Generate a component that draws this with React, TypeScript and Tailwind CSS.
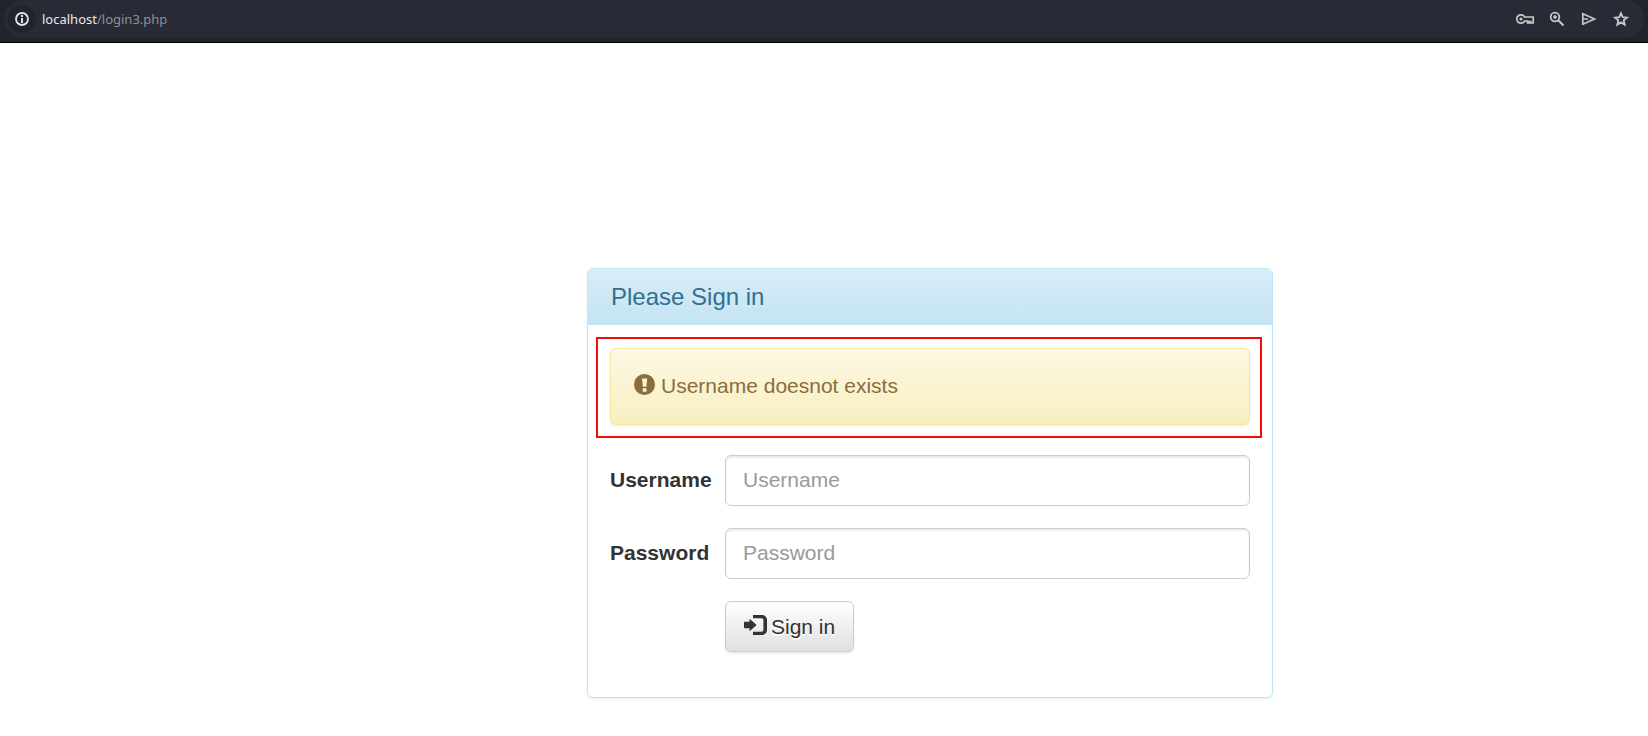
import React, { useState } from 'react';

const inputClass =
    'h-[51px] w-full rounded-[6px] border border-[#cccccc] bg-white px-[17px] pb-[2px] text-[21px] leading-[30px] text-[#555555] placeholder:text-[#999999] placeholder:opacity-100 shadow-[inset_0_2px_2px_rgba(0,0,0,0.075)] outline-none focus:border-[#66afe9]';

const labelClass = 'pb-[2px] text-[21px] leading-[30px] font-bold text-[#333333]';

const AddressBar = () => {
    return (
        <header className="bg-[#22242d] border-b border-black px-1 pb-1">
            <div className="flex h-[38px] items-center rounded-full bg-[#282a35] pl-1 pr-[13px]">
                <button type="button" aria-label="Site information" className="flex size-7 items-center justify-center rounded-full bg-[#22242d] text-[#e3e3e3]">
                    <svg viewBox="0 0 16 16" className="size-4" fill="currentColor">
                        <path d="M7 4h2v2H7zM7 7h2v5H7z" />
                        <circle cx="8" cy="8" r="6" fill="none" stroke="currentColor" strokeWidth="1.8" />
                    </svg>
                </button>
                <p className="ml-[6px] flex-1 font-['Noto_Sans',sans-serif] text-[13px] leading-5 text-[#8f9197]">
                    <span className="text-[#e8e8ea]">localhost</span>/login3.php
                </p>
                <nav className="flex items-center gap-3 text-[#c7c7c7]">
                    <button type="button" aria-label="Passwords">
                        <svg viewBox="0 0 20 20" className="size-5" fill="none" stroke="currentColor" strokeWidth="1.7">
                            <path d="M9.600 8a4.200 4.200 0 1 0 0 4h2.900v2h1.700v-1.500h1.500V14h2.500V8z" />
                            <circle cx="6" cy="10" r="1.6" fill="currentColor" stroke="none" />
                        </svg>
                    </button>
                    <button type="button" aria-label="Zoom">
                        <svg viewBox="0 0 20 20" className="size-5" fill="none" stroke="currentColor" strokeWidth="1.8">
                            <circle cx="8" cy="8" r="4.3" />
                            <path d="M11.2 11.2l5.300 5.300" strokeWidth="2" />
                            <path d="M8 6v4M6 8h4" strokeWidth="1.6" />
                        </svg>
                    </button>
                    <button type="button" aria-label="Share">
                        <svg viewBox="0 0 20 20" className="size-5" fill="none" stroke="currentColor" strokeWidth="1.7">
                            <path d="M3.800 4.800v10.400L15.500 10zM4 10h5" />
                        </svg>
                    </button>
                    <button type="button" aria-label="Bookmark">
                        <svg viewBox="0 0 20 20" className="size-5" fill="none" stroke="currentColor" strokeWidth="1.8">
                            <path d="M10 4.200l1.700 4 4.300.4-3.300 2.800 1 4.300-3.700-2.300-3.700 2.300 1-4.300L4 8.600l4.300-.4z" />
                        </svg>
                    </button>
                </nav>
            </div>
        </header>
    );
};

const App = () => {
    const [username, setUsername] = useState('');
    const [password, setPassword] = useState('');

    return (
        <div className="min-h-screen bg-white font-['Liberation_Sans',Arial,sans-serif]">
            <AddressBar />

            <main className="grid grid-cols-[587fr_686fr_375fr] pt-[225px] pb-9">
                <section className="col-start-2 rounded-[6px] border border-[#bce8f1] bg-white shadow-[0_2px_3px_rgba(0,0,0,0.05)]">
                    <div className="rounded-t-[5px] bg-linear-to-b from-[#d9edf7] to-[#c4e3f3] px-[23px] py-[14px]">
                        <h1 className="text-[24px] leading-7 text-[#31708f]">Please Sign in</h1>
                    </div>

                    <div className="mt-3 mr-[10px] ml-2 border-2 border-[#f70a03] pt-[9px] pr-[10px] pb-[11px] pl-3">
                        <div role="alert" className="flex items-center gap-[6px] rounded-[6px] border border-[#f5e79e] bg-linear-to-b from-[#fcf8e3] to-[#f8efc0] px-[23px] pt-[22px] pb-[23px] text-[21px] leading-[30px] text-[#8a6d3b] shadow-[inset_0_2px_0_rgba(255,255,255,0.25),0_2px_3px_rgba(0,0,0,0.05)]">
                            <svg viewBox="0 0 21 21" className="mb-1 size-[21px]">
                                <circle cx="10.5" cy="10.5" r="10.5" fill="currentColor" />
                                <path d="M8 4.600h5.200l-.8 8.200H8.900zM8.700 14.200h3.800v3.600H8.700z" fill="#faf3d2" />
                            </svg>
                            <span className="[text-shadow:0_1px_0_rgba(255,255,255,0.2)]">Username doesnot exists</span>
                        </div>
                    </div>

                    <form className="grid grid-cols-[115px_1fr] items-center gap-y-[22px] px-[22px] pt-[17px] pb-[45px]" onSubmit={(e) => e.preventDefault()}>
                        <label htmlFor="username" className={labelClass}>Username</label>
                        <input id="username" type="text" placeholder="Username" className={inputClass} value={username} onChange={(e) => setUsername(e.target.value)} />

                        <label htmlFor="password" className={labelClass}>Password</label>
                        <input id="password" type="password" placeholder="Password" className={inputClass} value={password} onChange={(e) => setPassword(e.target.value)} />

                        <button type="submit" className="col-start-2 flex h-[51px] items-center gap-1 justify-self-start rounded-[6px] border border-[#cccccc] bg-linear-to-b from-white to-[#e0e0e0] px-[18px] text-[21px] leading-[30px] text-[#333333] shadow-[inset_0_2px_0_rgba(255,255,255,0.15),0_2px_2px_rgba(0,0,0,0.075)] [text-shadow:0_2px_0_#ffffff]">
                            <svg viewBox="0 0 23 20" className="mb-1 h-5 w-[23px]" fill="currentColor">
                                <path d="M.6 6.800H5.500V4.600q0-.8.600-.3l6 5.200q.6.500 0 1l-6 5.200q-.6.500-.6-.3v-2.200H.6q-.6 0-.6-.6V7.400q0-.6.600-.6z" />
                                <path d="M9 0h9.200A4.800 4.800 0 0 1 23 4.800v10.400a4.800 4.800 0 0 1-4.800 4.800H9v-3.200h8.400a2 2 0 0 0 2-2V5.200a2 2 0 0 0-2-2H9z" />
                            </svg>
                            Sign in
                        </button>
                    </form>
                </section>
            </main>
        </div>
    );
};

export default App;
